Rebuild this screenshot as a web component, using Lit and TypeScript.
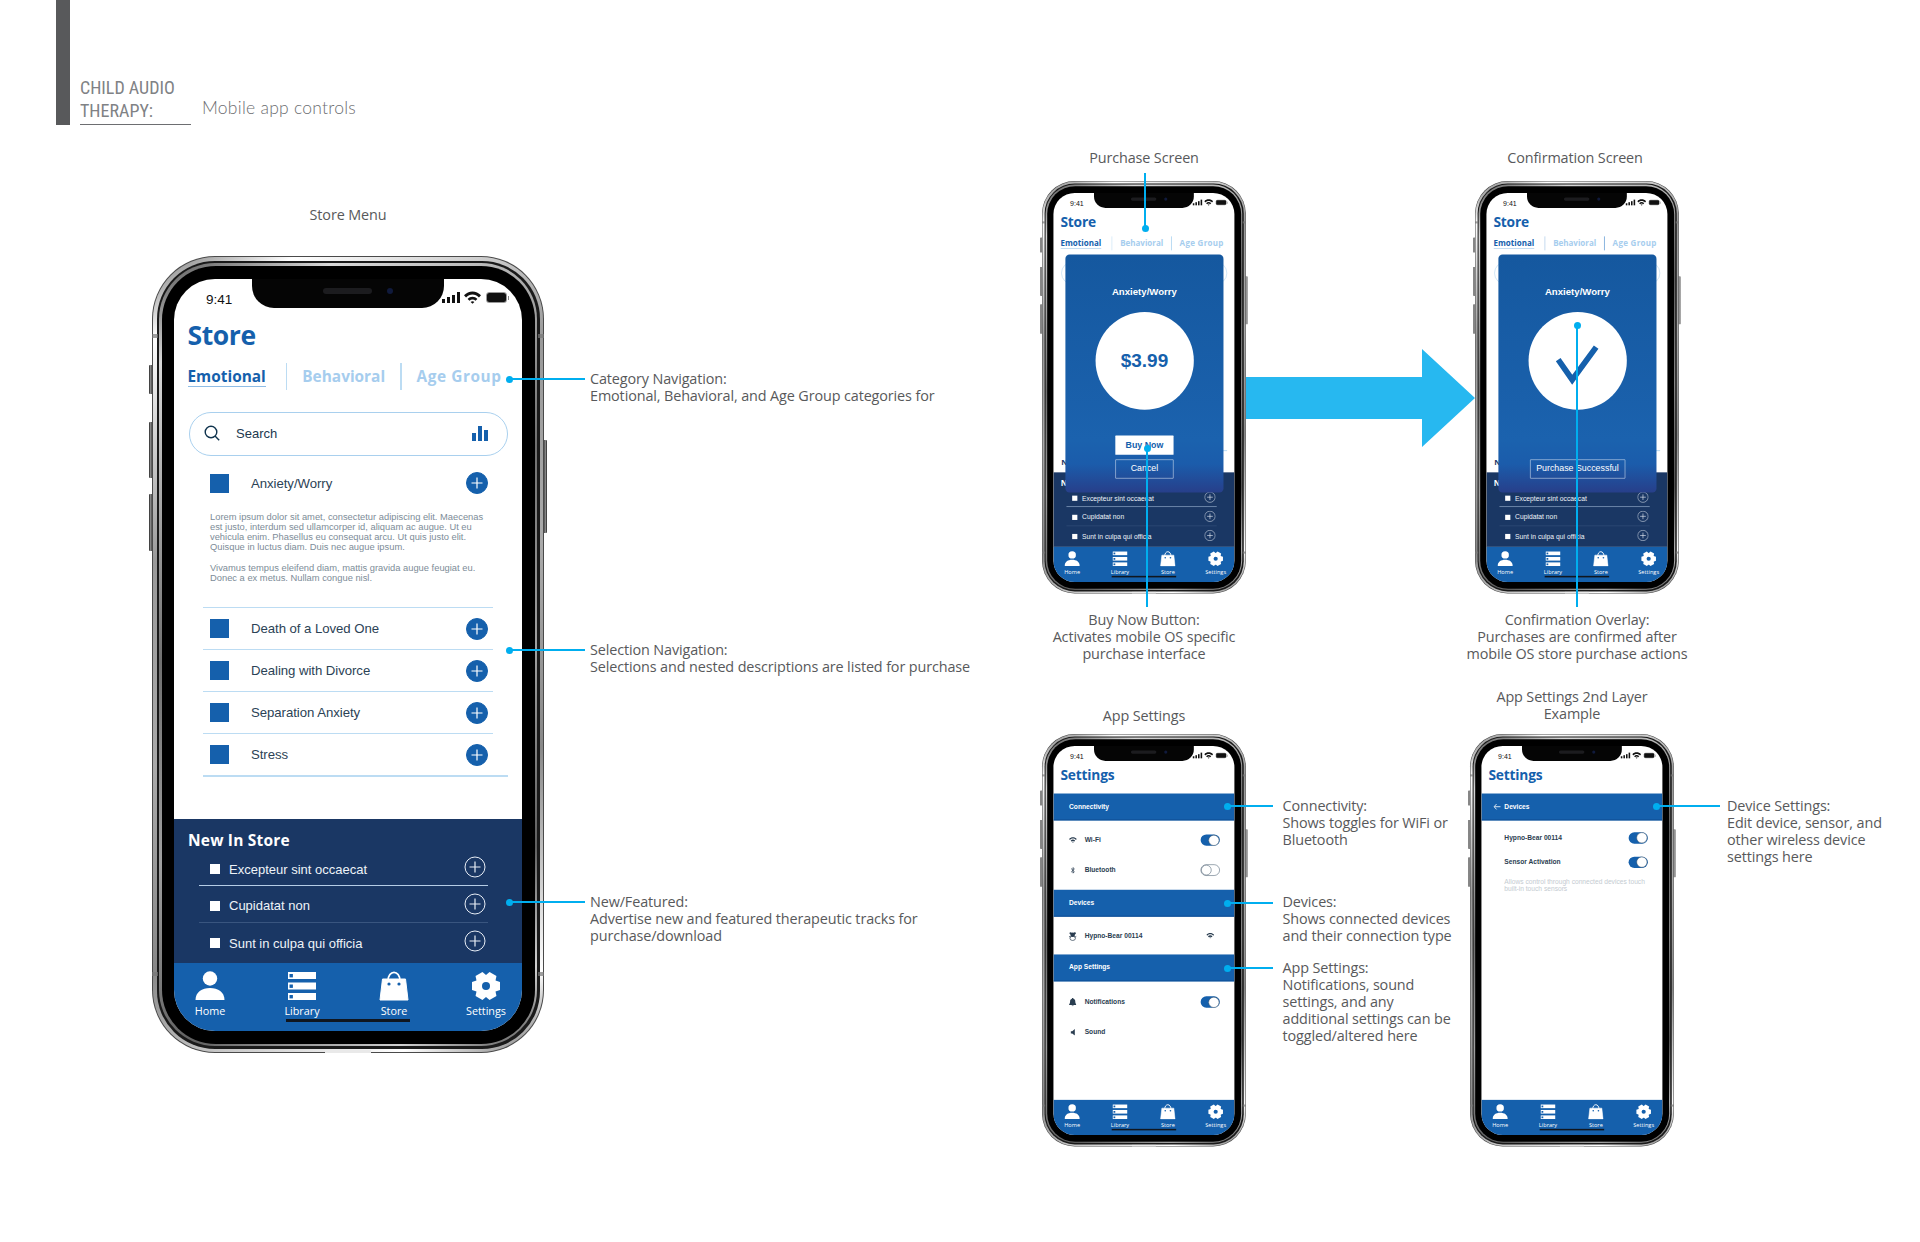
import { LitElement, html, css, svg, unsafeCSS } from "lit";
import { customElement, property } from "lit/decorators.js";

const BLUE = "#1560ac";
const BC = unsafeCSS(BLUE);

const gear = svg`<svg class="ic" viewBox="-15 -15 30 30" width="30" height="30">
  <circle r="10.5" fill="#fff"/>
  ${[0, 60, 120, 180, 240, 300].map(
    (a) => svg`<path d="M-4 -14 L4 -14 L6 -8 L-6 -8Z" fill="#fff" transform="rotate(${a + 30})"/>`
  )}
  <circle r="4" fill="${BLUE}"/>
</svg>`;

const homeIcon = svg`<svg class="ic" viewBox="0 0 30 30" width="30" height="30">
  <circle cx="15" cy="7.5" r="7.2" fill="#fff"/>
  <path d="M0.5 29 C0.5 21 7 17 15 17 C23 17 29.5 21 29.5 29 Z" fill="#fff"/>
</svg>`;

const libIcon = svg`<svg class="ic" viewBox="0 0 30 30" width="30" height="30">
  ${[1, 11.5, 22].map(
    (y) => svg`<rect x="1" y="${y}" width="28" height="7" fill="#fff"/><rect x="2.5" y="${y + 2}" width="3.4" height="3.4" fill="${BLUE}"/>`
  )}
</svg>`;

const bagIcon = svg`<svg class="ic" viewBox="0 0 30 30" width="30" height="30">
  <path d="M9 10 C9 -1.5 21 -1.5 21 10" fill="none" stroke="#fff" stroke-width="1.8"/>
  <path d="M3.5 8 H26.5 L29 29 H1 Z" fill="#fff" stroke="#fff" stroke-linejoin="round"/>
  <circle cx="10" cy="13" r="1.6" fill="${BLUE}"/><circle cx="20" cy="13" r="1.6" fill="${BLUE}"/>
</svg>`;

const wifi = (w: number, c: string) => svg`<svg viewBox="0 0 20 15" width="${w}" height="${(w * 15) / 20}">
  <path d="M0 5 C5.5 -1 14.5 -1 20 5 L17.6 7.6 C13.5 3 6.5 3 2.4 7.6Z" fill="${c}"/>
  <path d="M4.2 9.4 C7.5 5.8 12.5 5.8 15.8 9.4 L13.5 11.6 C11.5 9.6 8.5 9.6 6.5 11.6Z" fill="${c}"/>
  <path d="M7.8 13 C9 11.8 11 11.8 12.2 13 L10 15Z" fill="${c}"/>
</svg>`;

const plusIcon = (filled: boolean) => svg`<svg viewBox="0 0 22 22" width="22" height="22">
  <circle cx="11" cy="11" r="${filled ? 10.5 : 10}" fill="${filled ? BLUE : "none"}" stroke="${filled ? BLUE : "#e8eef6"}" stroke-width="1"/>
  <path d="M11 5.5V16.5M5.5 11H16.5" stroke="${filled ? "#fff" : "#e8eef6"}" stroke-width="1.2"/>
</svg>`;

const STORE_ROWS = ["Death of a Loved One", "Dealing with Divorce", "Separation Anxiety", "Stress"];
const NEW_ROWS = ["Excepteur sint occaecat", "Cupidatat non", "Sunt in culpa qui officia"];

@customElement("phone-frame")
class PhoneFrame extends LitElement {
  @property() kind = "store";
  static styles = css`
    :host { display: block; width: 392px; height: 797px; font-family: "Liberation Sans", Arial, sans-serif; }
    .device { position: relative; width: 392px; height: 797px; }
    .btn { position: absolute; background: linear-gradient(90deg, #222, #999 60%, #333); width: 3px; border-radius: 1px 0 0 1px; }
    .b1 { left: -3px; top: 109px; height: 29px; }
    .b2 { left: -3px; top: 166px; height: 56px; }
    .b3 { left: -3px; top: 238px; height: 57px; }
    .b4 { right: -3px; top: 184px; height: 93px; border-radius: 0 1px 1px 0; background: linear-gradient(90deg, #333, #999 40%, #222); }
    .gap { position: absolute; left: 173px; bottom: 0; width: 46px; height: 3px; background: #e9e9e9; }
    .ant { position: absolute; width: 6px; height: 4px; background: #777; opacity: .7; }
    .ring1 { box-sizing: border-box; width: 392px; height: 797px; padding: 1px; border-radius: 63px; background: #4a4a4a; }
    .ring2 { height: 100%; box-sizing: border-box; padding: 3.5px; border-radius: 62px;
      background: linear-gradient(150deg, #777 0%, #fff 8%, #999 30%, #aaa 50%, #888 70%, #fff 92%, #777 100%); }
    .ring3 { height: 100%; box-sizing: border-box; padding: 2.5px; border-radius: 58px; background: #1a1a1a; }
    .ring4 { height: 100%; box-sizing: border-box; padding: 2.5px; border-radius: 56px;
      background: linear-gradient(150deg, #555 0%, #d8d8d8 10%, #707070 40%, #a0a0a0 60%, #606060 80%, #d0d0d0 92%, #555 100%); }
    .bezel { height: 100%; box-sizing: border-box; padding: 13.5px 12.5px 12.5px; border-radius: 54px; background: #000; }
    .screen { position: relative; width: 348px; height: 752px; border-radius: 41px; overflow: hidden; background: #fff;
      display: flex; flex-direction: column; }

    .notch { position: absolute; left: 78px; top: 0; width: 192px; height: 29px; background: #050505; border-radius: 0 0 22px 22px; }
    .speaker { position: absolute; left: 71px; top: 9px; width: 49px; height: 6px; border-radius: 3px; background: #1c1c1f; }
    .cam { position: absolute; left: 135px; top: 9px; width: 6px; height: 6px; border-radius: 50%; background: #101a3c; }
    .status { height: 40px; flex: none; box-sizing: border-box; padding: 0 13px 0 32px; display: flex; justify-content: space-between; align-items: center; }
    .time { font-size: 13.5px; color: #111; }
    .sicons { display: flex; align-items: center; gap: 4px; padding-bottom: 3px; }
    .bars { display: flex; align-items: flex-end; gap: 2px; height: 11px; }
    .bars i { display: block; width: 3px; background: #111; }
    .batt { width: 19px; height: 9px; background: #111; border-radius: 2.5px; margin-left: 2px; box-shadow: 0 0 0 1px #999; }
    .nub { width: 1px; height: 4px; background: #888; margin-left: -2px; }

    h1 { margin: 0; padding-left: 13.5px; height: 36px; font: 700 26.5px/32px "Open Sans", sans-serif; color: ${BC}; letter-spacing: -.4px; flex: none; }
    .tabs { margin-top: 8px; height: 27px; padding-left: 13.5px; display: flex; align-items: center; flex: none; font: 700 15.4px/27px "Open Sans", sans-serif; color: #a6cdee; }
    .tabs .on { color: ${BC}; border-bottom: 1px solid #8fbde6; line-height: 19px; }
    .tabs .sep { width: 1.5px; height: 27px; background: #bcdcf3; margin: 0 15px 0 20px; }
    .tabs .sep.s2 { margin-left: 15px; }
    .tabs .age { letter-spacing: .55px; }
    .tabs.dark .sep { background: #8fb8e0; }

    .search { margin: 22px 14px 0 15px; height: 44px; flex: none; box-sizing: border-box; border: 1.2px solid #a9d0ee; border-radius: 22px;
      display: flex; align-items: center; padding: 0 19px 2px 14px; font-size: 13px; color: #21394f; }
    .search span { margin-left: 16px; flex: 1; }

    .list { flex: 1; position: relative; }
    .row { margin-left: 29px; width: 290px; height: 42px; box-sizing: border-box; border-top: 1.5px solid #bcdcf3; display: flex; align-items: center; padding: 0 5px 0 7px; font-size: 13.2px; color: #2b4255; letter-spacing: -.05px; }
    .first { margin-top: 7px; border-top: 0; height: 40px; }
    .sq { flex: none; width: 19px; height: 19px; background: ${BC}; margin-right: 22px; }
    .row span { flex: 1; }
    .row svg { display: block; }
    .desc { margin: 9px 0 0 36px; height: 95px; font-size: 9.35px; line-height: 10.1px; color: #7d8c98; white-space: nowrap; }
    .desc p { margin: 0 0 10.5px; }
    .hidden { height: 320px; }
    .endrule { margin-left: 29px; width: 305px; height: 1.5px; background: #bcdcf3; }
    .ghost { position: absolute; left: 15px; bottom: 12px; font: 700 15px/18px "Open Sans", sans-serif; color: #1a3764; }

    .news { height: 144px; flex: none; background: #1a3764; color: #fff; }
    .news h2 { margin: 0; padding: 12px 0 0 14px; font: 700 15.5px/18px "Open Sans", sans-serif; letter-spacing: .2px; }
    .nrow { margin-left: 25px; width: 289px; height: 37px; box-sizing: border-box; padding: 3px 2px 0 11px; display: flex; align-items: center; font-size: 13px; color: #eef3f8; border-bottom: 1px solid #39557f; }
    .nrow:first-of-type { border-bottom: 1.5px solid #b5cde6; padding-top: 4px; }
    .nrow:last-of-type { border-bottom: 0; }
    .nsq { width: 10px; height: 10px; background: #fff; margin-right: 9px; flex: none; }
    .nrow span { flex: 1; }
    .nrow svg { display: block; margin-top: -4px; }

    .nav { height: 68px; flex: none; background: ${BC}; display: flex; justify-content: space-between; color: #fff; font: 400 10.8px/14px "Open Sans", sans-serif; }
    .nav div { width: 72px; display: flex; flex-direction: column; align-items: center; padding-top: 8px; }
    .nav span { margin-top: 3px; }
    .ic { display: block; }
    .ind { position: absolute; left: 112px; top: 740px; width: 124px; height: 2.5px; background: #10161f; }

    .overlay { position: absolute; left: 23px; top: 119px; width: 304px; height: 460px; border-radius: 8px; color: #fff;
      background: linear-gradient(180deg, #15589f 0%, #1b62ae 78%, #1b5cab 88%, #273f8a 100%);
      display: flex; flex-direction: column; align-items: center; }
    .otitle { margin-top: 62px; font: 700 18.5px/22px "Liberation Sans", sans-serif; }
    .circle { margin-top: 27px; width: 189px; height: 189px; border-radius: 50%; background: #fff; display: flex; align-items: center; justify-content: center; font: 700 36.5px/40px "Liberation Sans", sans-serif; color: ${BC}; flex: none; }
    .buy { margin-top: 50px; width: 112px; height: 37px; background: #fff; color: ${BC}; font: 700 17px/37px "Liberation Sans", sans-serif; text-align: center; border-radius: 1px; }
    .cancel { margin-top: 9px; width: 112px; height: 37px; box-sizing: border-box; border: 1.5px solid #dfe9f5; font: 400 17px/34px "Liberation Sans", sans-serif; text-align: center; border-radius: 1px; }
    .done { margin-top: 96px; width: 183px; height: 37px; box-sizing: border-box; border: 1.5px solid #dfe9f5; font: 400 17px/34px "Liberation Sans", sans-serif; text-align: center; border-radius: 1px; }

    .band { height: 52px; flex: none; background: ${BC}; border-bottom: 2px solid #0f4f96; box-sizing: border-box; color: #fff; font: 700 12.8px/50px "Liberation Sans", sans-serif; padding-left: 30px; display: flex; align-items: center; }
    .band.back { padding-left: 23px; }
    .band svg { margin: 0 7px 0 0; }
    .sett { height: 58px; flex: none; display: flex; align-items: center; font: 700 12.8px/14px "Liberation Sans", sans-serif; color: #2a3d50; padding-right: 28px; }
    .sett .gl { width: 60px; flex: none; display: flex; justify-content: center; padding-left: 14px; box-sizing: border-box; }
    .sett span { flex: 1; }
    .sett .glyph { width: 37px; flex: none; text-align: center; }
    .tog { flex: none; width: 37px; height: 22px; border-radius: 11px; background: ${BC}; display: flex; justify-content: flex-end; align-items: center; padding: 0 1px; box-sizing: border-box; }
    .tog i { display: block; width: 21px; height: 21px; border-radius: 50%; background: #fff; box-sizing: border-box; border: 1px solid #41556a; }
    .tog.off { background: #fff; border: 1px solid #41556a; justify-content: flex-start; padding: 0; }
    .tog.off i { width: 20px; height: 20px; }
    .spacer { flex: 1; }
    .top { height: 16px; flex: none; }
    .m6 { margin-top: 6px; }
    .m9 { margin-top: 9px; }
    .m11 { margin-top: 11px; }
    .l2 { padding-left: 44px; padding-right: 28px; height: 47px; display: flex; align-items: center; font: 700 12.8px/14px "Liberation Sans", sans-serif; color: #2a3d50; flex: none; }
    .l2 span { flex: 1; }
    .l2.a { margin-top: 10px; }
    .l2note { padding-left: 44px; font-size: 12.8px; line-height: 14px; color: #c4cbd1; white-space: nowrap; margin-top: 8px; }
  `;

  nav() {
    return html`<div class="nav">
      <div>${homeIcon}<span>Home</span></div>
      <div>${libIcon}<span>Library</span></div>
      <div>${bagIcon}<span>Store</span></div>
      <div>${gear}<span>Settings</span></div>
    </div><div class="ind"></div>`;
  }

  head(title: string) {
    return html`<div class="status">
        <div class="time">9:41</div>
        <div class="sicons">
          <div class="bars"><i style="height:4px"></i><i style="height:6px"></i><i style="height:8px"></i><i style="height:11px"></i></div>
          ${wifi(17, "#111")}
          <div class="batt"></div><div class="nub"></div>
        </div>
      </div>
      <h1>${title}</h1>`;
  }

  storeBase(small: boolean) {
    return html`${this.head("Store")}
      <div class="tabs ${this.kind === "confirm" ? "dark" : ""}">
        <span class="on">Emotional</span><i class="sep"></i><span>Behavioral</span><i class="sep s2"></i><span class="age">Age Group</span>
      </div>
      <div class="search">
        ${small
          ? ""
          : html`<svg viewBox="0 0 16 16" width="16" height="16"><circle cx="7" cy="7" r="5.8" fill="none" stroke="#10344e" stroke-width="1.4"/><path d="M11 11L15.2 15.2" stroke="#10344e" stroke-width="1.4"/></svg>
              <span>Search</span>
              <svg viewBox="0 0 16 16" width="16" height="16"><path d="M0 8h4v8H0zM6 1h4v15H6zM12 5h4v11h-4z" fill="${BLUE}"/></svg>`}
      </div>
      <div class="list">
        ${small
          ? html`<div class="hidden"></div>`
          : html`<div class="row first"><i class="sq"></i><span>Anxiety/Worry</span>${plusIcon(true)}</div>
              <div class="desc">
                <p>Lorem ipsum dolor sit amet, consectetur adipiscing elit. Maecenas<br>est justo, interdum sed ullamcorper id, aliquam ac augue. Ut eu<br>vehicula enim. Phasellus eu consequat arcu. Ut quis justo elit.<br>Quisque in luctus diam. Duis nec augue ipsum.</p>
                <p>Vivamus tempus eleifend diam, mattis gravida augue feugiat eu.<br>Donec a ex metus. Nullam congue nisl.</p>
              </div>
              ${STORE_ROWS.map((r) => html`<div class="row"><i class="sq"></i><span>${r}</span>${plusIcon(true)}</div>`)}`}
        <div class="endrule"></div>
        ${small ? html`<div class="ghost">New In Store</div>` : ""}
      </div>
      <div class="news">
        <h2>New In Store</h2>
        ${NEW_ROWS.map((r) => html`<div class="nrow"><i class="nsq"></i><span>${r}</span>${plusIcon(false)}</div>`)}
      </div>
      ${this.nav()}`;
  }

  purchase() {
    return html`<div class="overlay">
      <div class="otitle">Anxiety/Worry</div>
      <div class="circle">$3.99</div>
      <div class="buy">Buy Now</div>
      <div class="cancel">Cancel</div>
    </div>`;
  }

  confirm() {
    return html`<div class="overlay">
      <div class="otitle">Anxiety/Worry</div>
      <div class="circle">
        <svg viewBox="0 0 189 189" width="189" height="189"><path d="M57 92 L84 131 L130 68" fill="none" stroke="${BLUE}" stroke-width="11"/></svg>
      </div>
      <div class="done">Purchase Successful</div>
    </div>`;
  }

  settings() {
    return html`${this.head("Settings")}
      <div class="top"></div>
      <div class="band">Connectivity</div>
      <div class="sett m9"><div class="gl">${wifi(15, "#2a3d50")}</div><span>Wi-Fi</span><div class="tog"><i></i></div></div>
      <div class="sett"><div class="gl"><svg viewBox="0 0 10 16" width="9" height="15"><path d="M1 4L8 11L5 14V2L8 5L1 12" fill="none" stroke="#2a3d50" stroke-width="1.6"/></svg></div><span>Bluetooth</span><div class="tog off"><i></i></div></div>
      <div class="band m9">Devices</div>
      <div class="sett m9"><div class="gl"><svg viewBox="0 0 18 20" width="16" height="18"><circle cx="4.5" cy="3.5" r="2.5" fill="#2a3d50"/><circle cx="13.5" cy="3.5" r="2.5" fill="#2a3d50"/><circle cx="9" cy="6.5" r="5" fill="#2a3d50"/><ellipse cx="9" cy="14" rx="6" ry="5" fill="none" stroke="#2a3d50" stroke-width="1.5"/><path d="M1 10l4 2M17 10l-4 2" stroke="#2a3d50" stroke-width="1.5"/></svg></div><span>Hypno-Bear 00114</span><div class="glyph">${wifi(15, "#2a3d50")}</div></div>
      <div class="band m6">App Settings</div>
      <div class="sett m11"><div class="gl"><svg viewBox="0 0 14 16" width="14" height="16"><path d="M7 0C8 0 8.5 1 8.5 1.6C11 2.3 12 4.4 12 7C12 10 13 11.5 14 12.5V13.5H0V12.5C1 11.5 2 10 2 7C2 4.4 3 2.3 5.5 1.6C5.5 1 6 0 7 0ZM5 14.5H9C9 15.6 8 16 7 16S5 15.6 5 14.5Z" fill="#2a3d50"/></svg></div><span>Notifications</span><div class="tog"><i></i></div></div>
      <div class="sett"><div class="gl"><svg viewBox="0 0 10 14" width="9" height="13"><path d="M0 4.5H3.5L9 0V14L3.5 9.5H0Z" fill="#2a3d50"/></svg></div><span>Sound</span></div>
      <div class="spacer"></div>
      ${this.nav()}`;
  }

  layer2() {
    return html`${this.head("Settings")}
      <div class="top"></div>
      <div class="band back">
        <svg viewBox="0 0 16 14" width="14" height="13"><path d="M7 1L1.5 7L7 13M2 7H16" fill="none" stroke="#fff" stroke-width="1.8"/></svg>Devices
      </div>
      <div class="l2 a"><span>Hypno-Bear 00114</span><div class="tog"><i></i></div></div>
      <div class="l2"><span>Sensor Activation</span><div class="tog"><i></i></div></div>
      <div class="l2note">Allows control through connected devices touch<br>built-in touch sensors</div>
      <div class="spacer"></div>
      ${this.nav()}`;
  }

  render() {
    const k = this.kind;
    return html`<div class="device">
      <i class="btn b1"></i><i class="btn b2"></i><i class="btn b3"></i><i class="btn b4"></i>
      <div class="ring1"><div class="ring2"><div class="ring3"><div class="ring4"><div class="bezel">
        <div class="screen">
          ${k === "settings" ? this.settings() : k === "layer2" ? this.layer2() : this.storeBase(k !== "store")}
          ${k === "purchase" ? this.purchase() : k === "confirm" ? this.confirm() : ""}
          <div class="notch"><i class="speaker"></i><i class="cam"></i></div>
        </div>
      </div></div></div></div></div>
      <i class="ant" style="left:0;top:78px"></i><i class="ant" style="right:0;top:78px"></i>
      <i class="ant" style="left:0;top:716px"></i><i class="ant" style="right:0;top:716px"></i>
      <i class="gap"></i>
    </div>`;
  }
}

const PHONES = [
  { k: "store", x: 152, y: 256, s: "1" },
  { k: "purchase", x: 1042, y: 181, s: "0.52,0.5175" },
  { k: "confirm", x: 1475, y: 181, s: "0.52,0.5175" },
  { k: "settings", x: 1042, y: 734, s: "0.52,0.5175" },
  { k: "layer2", x: 1470, y: 734, s: "0.52,0.5175" },
];

const NOTES: [number, number, string[]][] = [
  [590, 370, ["Category Navigation:", "Emotional, Behavioral, and Age Group categories for"]],
  [590, 641, ["Selection Navigation:", "Selections and nested descriptions are listed for purchase"]],
  [590, 893, ["New/Featured:", "Advertise new and featured therapeutic tracks for", "purchase/download"]],
  [1282.5, 797, ["Connectivity:", "Shows toggles for WiFi or", "Bluetooth"]],
  [1282.5, 893, ["Devices:", "Shows connected devices", "and their connection type"]],
  [1282.5, 959, ["App Settings:", "Notifications, sound", "settings, and any", "additional settings can be", "toggled/altered here"]],
  [1727, 797, ["Device Settings:", "Edit device, sensor, and", "other wireless device", "settings here"]],
];

const CENTERED: [number, number, string[]][] = [
  [348, 206, ["Store Menu"]],
  [1144, 149, ["Purchase Screen"]],
  [1575, 149, ["Confirmation Screen"]],
  [1144, 611, ["Buy Now Button:", "Activates mobile OS specific", "purchase interface"]],
  [1577, 611, ["Confirmation Overlay:", "Purchases are confirmed after", "mobile OS store purchase actions"]],
  [1144, 707, ["App Settings"]],
  [1572, 688, ["App Settings 2nd Layer", "Example"]],
];

const HL: [number, number, number][] = [
  [509, 379, 585],
  [509, 650, 585],
  [509, 902, 585],
  [1227, 806, 1273],
  [1227, 903, 1273],
  [1227, 968, 1273],
  [1656, 806, 1720],
];
const VL: [number, number, number, number][] = [
  [1145, 173, 228, 228],
  [1147, 448, 607, 448],
  [1577, 325, 607, 325],
];

@customElement("app-root")
class AppRoot extends LitElement {
  static styles = css`
    :host { display: block; width: 1920px; height: 1242px; background: #fff; overflow: hidden; }
    .board { position: relative; width: 1920px; height: 1242px; background: #fff; font-family: "Open Sans", sans-serif; color: #58595b; }
    .item { position: absolute; }
    .phone { transform-origin: 0 0; }
    .bar { position: absolute; left: 56px; top: 0; width: 14px; height: 125px; background: #58595b; }
    .brand { position: absolute; left: 80px; top: 77px; width: 111px; height: 47px; border-bottom: 1.5px solid #6d6e71; font: 400 18px/22.5px "Liberation Sans Narrow", "Roboto Condensed", "Liberation Sans", sans-serif; color: #808285; }
    .sub { position: absolute; left: 202px; top: 96px; font: 300 17.5px/24px Lato, sans-serif; color: #6d6e71; letter-spacing: .25px; }
    .note { position: absolute; font-size: 14.4px; line-height: 17px; white-space: nowrap; letter-spacing: -.12px; }
    .ctr { transform: translateX(-50%); text-align: center; }
    .h { position: absolute; height: 1.5px; background: #00aeef; }
    .v { position: absolute; width: 1.5px; background: #00aeef; }
    .dot { position: absolute; width: 7px; height: 7px; border-radius: 50%; background: #00aeef; }
  `;

  render() {
    return html`<div class="board">
      <div class="bar"></div>
      <div class="brand">CHILD AUDIO<br>THERAPY:</div>
      <div class="sub">Mobile app controls</div>

      ${PHONES.map(
        (p) => html`<phone-frame class="item phone" kind=${p.k} style="left:${p.x}px;top:${p.y}px;transform:scale(${p.s})"></phone-frame>`
      )}

      <svg class="item" style="left:1246px;top:349px" width="230" height="98" viewBox="0 0 230 98"><path d="M0 28H176V0L229 49L176 98V70H0Z" fill="#27b8f0"/></svg>

      ${HL.map(
        ([x, y, e]) => html`<div class="h" style="left:${x}px;top:${y - 0.75}px;width:${e - x}px"></div><div class="dot" style="left:${x - 3.5}px;top:${y - 3.5}px"></div>`
      )}
      ${VL.map(
        ([x, t, b, d]) => html`<div class="v" style="left:${x - 0.75}px;top:${t}px;height:${b - t}px"></div><div class="dot" style="left:${x - 3.5}px;top:${d - 3.5}px"></div>`
      )}

      ${NOTES.map(
        ([x, y, ls]) => html`<div class="note" style="left:${x}px;top:${y}px">${ls.map((l) => html`${l}<br>`)}</div>`
      )}
      ${CENTERED.map(
        ([x, y, ls]) => html`<div class="note ctr" style="left:${x}px;top:${y}px">${ls.map((l) => html`${l}<br>`)}</div>`
      )}
    </div>`;
  }
}
